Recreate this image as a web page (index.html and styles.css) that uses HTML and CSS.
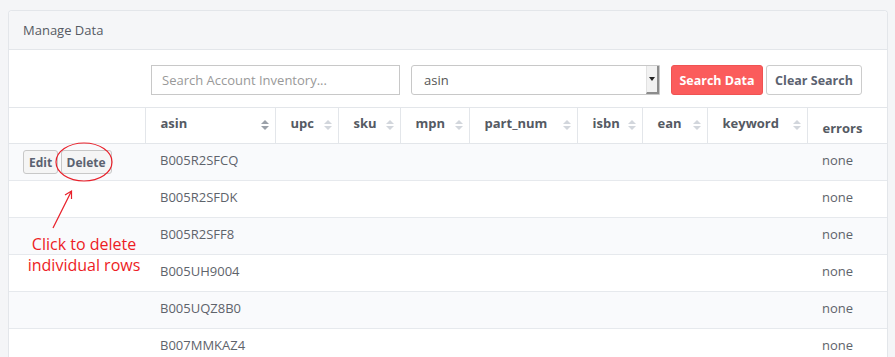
FILE: index.html
```html
<!DOCTYPE html>
<html lang="en">
<head>
    <meta charset="UTF-8">
    <title>Manage Data</title>
    <link rel="stylesheet" href="styles.css">
</head>
<body>
    <div class="panel">
        <div class="panel-heading">Manage Data</div>
        <form class="search-form">
            <input type="text" class="search-input" placeholder="Search Account Inventory...">
            <div class="select-box">
                <span>asin</span>
                <span class="select-arrow"></span>
            </div>
            <button type="button" class="btn btn-danger">Search Data</button>
            <button type="button" class="btn btn-default">Clear Search</button>
        </form>
        <table class="data-table">
            <thead>
                <tr>
                    <th class="col-actions"></th>
                    <th class="col-asin sortable active">asin</th>
                    <th class="col-upc sortable">upc</th>
                    <th class="col-sku sortable">sku</th>
                    <th class="col-mpn sortable">mpn</th>
                    <th class="col-part sortable">part_num</th>
                    <th class="col-isbn sortable">isbn</th>
                    <th class="col-ean sortable">ean</th>
                    <th class="col-keyword sortable">keyword</th>
                    <th class="col-errors">errors</th>
                </tr>
            </thead>
            <tbody>
                <tr>
                    <td class="actions">
                        <button type="button" class="btn-sm">Edit</button>
                        <button type="button" class="btn-sm">Delete</button>
                    </td>
                    <td>B005R2SFCQ</td><td></td><td></td><td></td><td></td><td></td><td></td><td></td><td>none</td>
                </tr>
                <tr><td></td><td>B005R2SFDK</td><td></td><td></td><td></td><td></td><td></td><td></td><td></td><td>none</td></tr>
                <tr><td></td><td>B005R2SFF8</td><td></td><td></td><td></td><td></td><td></td><td></td><td></td><td>none</td></tr>
                <tr><td></td><td>B005UH9004</td><td></td><td></td><td></td><td></td><td></td><td></td><td></td><td>none</td></tr>
                <tr><td></td><td>B005UQZ8B0</td><td></td><td></td><td></td><td></td><td></td><td></td><td></td><td>none</td></tr>
                <tr><td></td><td>B007MMKAZ4</td><td></td><td></td><td></td><td></td><td></td><td></td><td></td><td>none</td></tr>
            </tbody>
        </table>

        <!-- annotation drawn over the table -->
        <svg class="note-marks" width="120" height="90" viewBox="0 0 120 90">
            <ellipse cx="75" cy="20" rx="28" ry="19" fill="none" stroke="#e8202a" stroke-width="1.2"/>
            <path d="M44 86 L62 50" stroke="#e8202a" stroke-width="1.2" fill="none"/>
            <path d="M56 53 L62.5 49 L62.5 57" stroke="#e8202a" stroke-width="1.2" fill="none"/>
        </svg>
        <div class="note-text">Click to delete<br>individual rows</div>
    </div>
</body>
</html>
```

FILE: styles.css
```css
body {
    font-family: "Open Sans", "Liberation Sans", sans-serif;
    background-color: #f4f5f7;
    margin: 0;
    padding: 10px 0 0 8px;
    font-size: 13px;
    color: #555a63;
}
.panel {
    position: relative;
    width: 878px;
    background-color: #fff;
    border: 1px solid #e3e6ea;
    border-radius: 4px 4px 0 0;
    border-bottom: none;
}
.panel-heading {
    height: 38px;
    line-height: 38px;
    padding: 0 14px;
    background-color: #f5f6f8;
    border-bottom: 1px solid #e3e6ea;
    border-radius: 4px 4px 0 0;
    color: #555a63;
}
.search-form {
    display: flex;
    align-items: center;
    padding: 15px 0 12px 142px;
    margin: 0;
}
.search-input {
    width: 249px;
    height: 30px;
    box-sizing: border-box;
    border: 1px solid #c8c8c8;
    padding: 0 10px;
    font-family: inherit;
    font-size: 13px;
    color: #555;
    border-radius: 0;
}
.search-input::placeholder {
    color: #999;
}
.select-box {
    display: flex;
    align-items: center;
    justify-content: space-between;
    width: 249px;
    height: 30px;
    box-sizing: border-box;
    margin-left: 11px;
    border: 1px solid #c8c8c8;
    border-radius: 3px 0 0 3px;
    padding-left: 12px;
    color: #555;
}
.select-arrow {
    position: relative;
    width: 13px;
    height: 28px;
    background-color: #f2f2f2;
    border-left: 1px solid #e2e2e2;
    border-right: 2px solid #8c8c8c;
    border-bottom: 2px solid #8c8c8c;
    box-sizing: border-box;
    align-self: stretch;
}
.select-arrow::after {
    content: "";
    position: absolute;
    left: 2px;
    top: 11px;
    border-left: 3px solid transparent;
    border-right: 3px solid transparent;
    border-top: 4px solid #222;
}
.btn {
    height: 30px;
    padding: 0;
    font-family: inherit;
    font-size: 12.5px;
    font-weight: bold;
    border-radius: 3px;
    white-space: nowrap;
    cursor: pointer;
}
.btn-danger {
    margin-left: 11px;
    background-color: #fb5c5c;
    border: 1px solid #f05252;
    color: #fff;
    width: 92px;
}
.btn-default {
    margin-left: 3px;
    background-color: #fff;
    border: 1px solid #ccc;
    color: #5b6270;
    width: 96px;
}
.data-table {
    width: 100%;
    border-collapse: collapse;
    table-layout: fixed;
}
.data-table th {
    position: relative;
    height: 36px;
    box-sizing: border-box;
    padding: 0 15px 6px;
    text-align: left;
    font-weight: bold;
    color: #555a63;
    border-top: 1px solid #e3e6ea;
    border-bottom: 1px solid #e3e6ea;
    border-left: 1px solid #e3e6ea;
}
.data-table th:first-child {
    border-left: none;
}
.data-table th.col-errors {
    padding: 4px 15px 0;
}
.sortable::after {
    content: "";
    position: absolute;
    right: 6px;
    top: 12px;
    width: 0;
    height: 0;
    border-left: 4px solid transparent;
    border-right: 4px solid transparent;
    border-bottom: 4px solid #d2d6dc;
}
.sortable::before {
    content: "";
    position: absolute;
    right: 6px;
    top: 18px;
    width: 0;
    height: 0;
    border-left: 4px solid transparent;
    border-right: 4px solid transparent;
    border-top: 4px solid #d2d6dc;
}
.sortable.active::after {
    border-bottom-color: #9ba1a9;
}
.sortable.active::before {
    border-top-color: #9ba1a9;
}
.col-actions { width: 136px; }
.col-asin { width: 130px; }
.col-upc { width: 63px; }
.col-sku { width: 62px; }
.col-mpn { width: 69px; }
.col-part { width: 108px; }
.col-isbn { width: 65px; }
.col-ean { width: 65px; }
.col-keyword { width: 100px; }
.data-table td {
    height: 37px;
    box-sizing: border-box;
    padding: 0 15px 4px;
    color: #5e636b;
    border-bottom: 1px solid #e6e9ed;
    white-space: nowrap;
}
.data-table tbody tr:nth-child(odd) {
    background-color: #f9fafc;
}
.data-table td.actions {
    padding: 0 0 0 14px;
}
.btn-sm {
    height: 24px;
    padding: 0 5px;
    font-family: inherit;
    font-size: 12px;
    font-weight: bold;
    color: #5b6270;
    background-color: #f5f5f5;
    border: 1px solid #c8c8c8;
    border-radius: 3px;
    margin-right: -1px;
}
.note-marks {
    position: absolute;
    left: 0;
    top: 131px;
}
.note-text {
    position: absolute;
    left: 12px;
    top: 223px;
    width: 126px;
    text-align: center;
    color: #ed1c24;
    font-size: 16px;
    line-height: 21px;
}
```
